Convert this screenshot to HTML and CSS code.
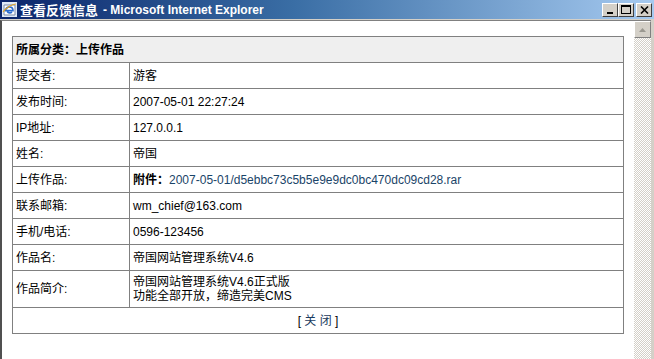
FILE: index.html
```html
<!DOCTYPE html>
<html lang="zh-CN">
<head>
    <meta charset="UTF-8">
    <title>查看反馈信息</title>
    <link rel="stylesheet" href="styles.css">
</head>
<body>
    <div class="window">
        <div class="titlebar">
            <div class="title">
                <svg class="ie-icon" width="15" height="15" viewBox="0 0 15 15">
                    <rect x="0" y="0" width="15" height="15" fill="#dfe9f7"/>
                    <path d="M2 3h11v10H2z" fill="#fff" stroke="#7a8aa8"/>
                    <path d="M3.5 9.5c0-3 2-4.5 4-4.5s3.5 1.4 3.5 3.6H5.2c.2 1.6 1.2 2.3 2.5 2.3 1 0 1.7-.4 2.2-1" fill="none" stroke="#2a6cd0" stroke-width="1.6"/>
                    <path d="M1 10c3-4 9-8 13-8" fill="none" stroke="#e3a21a" stroke-width="1.1"/>
                </svg>
                <span class="title-cn">查看反馈信息</span>
                <span class="title-en">- Microsoft Internet Explorer</span>
            </div>
            <div class="win-buttons">
                <span class="win-btn">
                    <svg width="8" height="8" viewBox="0 0 8 8"><rect x="1" y="6" width="6" height="2" fill="#000"/></svg>
                </span>
                <span class="win-btn">
                    <svg width="10" height="9" viewBox="0 0 10 9"><rect x="0.5" y="0.5" width="9" height="8" fill="none" stroke="#000"/><rect x="0" y="0" width="10" height="2" fill="#000"/></svg>
                </span>
                <span class="win-btn close-btn">
                    <svg width="9" height="8" viewBox="0 0 9 8"><path d="M1 0.5l7 7M8 0.5l-7 7" stroke="#000" stroke-width="1.6"/></svg>
                </span>
            </div>
        </div>

        <div class="frame">
            <div class="content">
                <table class="info">
                    <tr class="head">
                        <td colspan="2">所属分类：上传作品</td>
                    </tr>
                    <tr>
                        <td class="label">提交者:</td>
                        <td>游客</td>
                    </tr>
                    <tr>
                        <td class="label">发布时间:</td>
                        <td>2007-05-01 22:27:24</td>
                    </tr>
                    <tr>
                        <td class="label">IP地址:</td>
                        <td>127.0.0.1</td>
                    </tr>
                    <tr>
                        <td class="label">姓名:</td>
                        <td>帝国</td>
                    </tr>
                    <tr>
                        <td class="label">上传作品:</td>
                        <td><strong class="attach">附件：</strong><a href="#" class="file-link">2007-05-01/d5ebbc73c5b5e9e9dc0bc470dc09cd28.rar</a></td>
                    </tr>
                    <tr>
                        <td class="label">联系邮箱:</td>
                        <td>wm_chief@163.com</td>
                    </tr>
                    <tr>
                        <td class="label">手机/电话:</td>
                        <td>0596-123456</td>
                    </tr>
                    <tr>
                        <td class="label">作品名:</td>
                        <td>帝国网站管理系统V4.6</td>
                    </tr>
                    <tr class="multi">
                        <td class="label">作品简介:</td>
                        <td>帝国网站管理系统V4.6正式版<br>功能全部开放，缔造完美CMS</td>
                    </tr>
                    <tr>
                        <td colspan="2" class="actions">[ <a href="#" class="close-link">关 闭</a> ]</td>
                    </tr>
                </table>
            </div>
            <div class="scrollbar">
                <div class="scroll-up">
                    <svg width="7" height="4" viewBox="0 0 7 4"><path d="M3.5 0L7 4H0z" fill="#9a9890"/></svg>
                </div>
                <div class="scroll-track"></div>
            </div>
        </div>
    </div>
</body>
</html>
```

FILE: styles.css
```css
body {
    margin: 0;
    background: #fff;
    font-family: "Liberation Sans", "Noto Sans CJK SC", sans-serif;
    font-size: 12px;
    color: #000;
}
.window {
    width: 654px;
    height: 359px;
    display: flex;
    flex-direction: column;
    background: #d4d0c8;
    overflow: hidden;
}
.titlebar {
    height: 19px;
    display: flex;
    align-items: center;
    justify-content: space-between;
    background: linear-gradient(to right, #0a246a 0%, #3a6ea5 45%, #a6caf0 100%);
    padding: 0 2px 0 2px;
}
.title {
    display: flex;
    align-items: center;
    color: #fff;
    font-weight: bold;
    white-space: nowrap;
}
.ie-icon {
    margin-right: 3px;
}
.title-cn {
    font-size: 13px;
    margin-right: 5px;
}
.title-en {
    font-size: 12px;
}
.win-buttons {
    display: flex;
    align-items: center;
}
.win-btn {
    width: 14px;
    height: 12px;
    display: flex;
    align-items: center;
    justify-content: center;
    background: #d4d0c8;
    border: 1px solid;
    border-color: #fff #404040 #404040 #fff;
}
.close-btn {
    margin-left: 2px;
}
.frame {
    flex: 1;
    display: flex;
    margin-top: 1px;
    border-top: 1px solid #808080;
    border-left: 2px solid #505050;
    margin-right: 3px;
    min-height: 0;
}
.content {
    flex: 1;
    background: #fff;
    padding: 15px 10px 0 10px;
}
.scrollbar {
    width: 17px;
    display: flex;
    flex-direction: column;
}
.scroll-up {
    height: 15px;
    display: flex;
    align-items: center;
    justify-content: center;
    background: #d4d0c8;
    border: 1px solid;
    border-color: #fff #808080 #808080 #fff;
}
.scroll-track {
    flex: 1;
    background: repeating-conic-gradient(#d4d0c8 0 25%, #fff 0 50%) 0 0 / 2px 2px;
}
.info {
    width: 612px;
    border-collapse: collapse;
    border: 1px solid #808080;
}
.info td {
    border: 1px solid #808080;
    padding: 4px 3px;
    height: 17px;
    line-height: 14px;
    vertical-align: middle;
}
.info .label {
    width: 110px;
}
.head td {
    background: #efefef;
    font-weight: bold;
}
.multi td {
    height: auto;
}
.attach {
    font-weight: bold;
}
.file-link {
    color: #1a4468;
    text-decoration: none;
}
.actions {
    text-align: center;
}
.close-link {
    color: #1a3a5e;
    text-decoration: none;
}
```
